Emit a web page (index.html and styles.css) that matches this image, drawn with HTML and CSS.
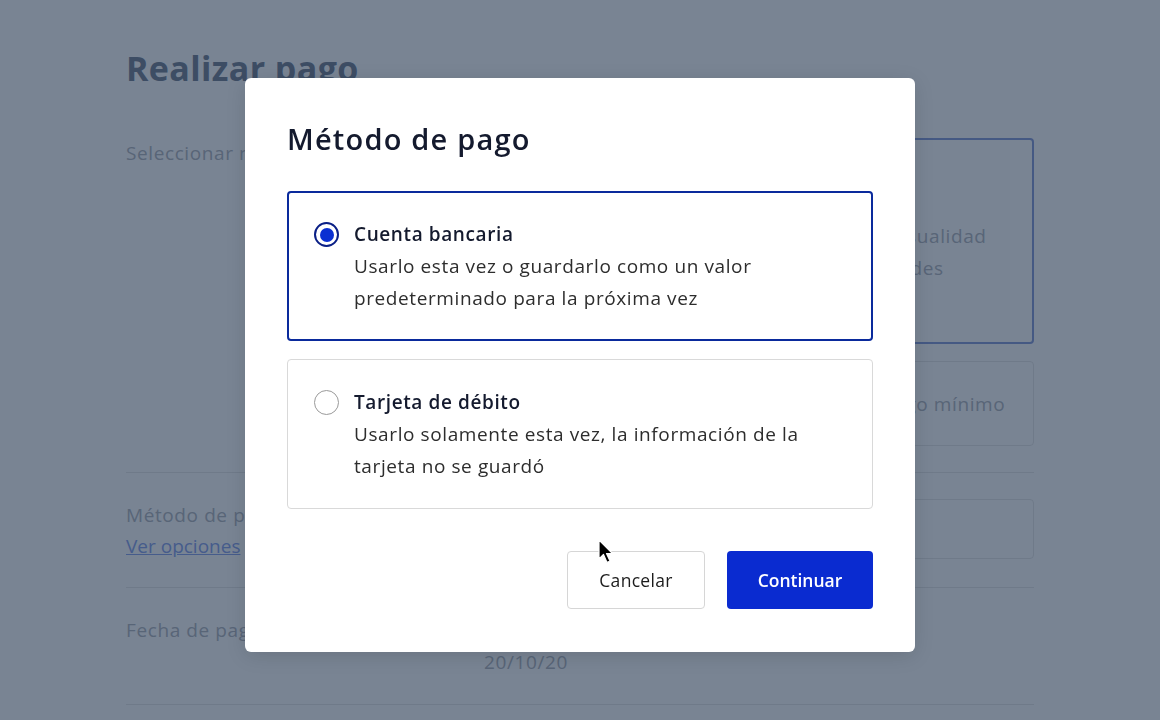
FILE: index.html
```html
<!DOCTYPE html>
<html lang="es">
<head>
    <meta charset="UTF-8">
    <meta name="viewport" content="width=device-width, initial-scale=1.0">
    <title>Realizar pago</title>
    <link rel="stylesheet" href="styles.css">
</head>
<body>
    <div class="page">
        <h1>Realizar pago</h1>

        <div class="row row-top">
            <div class="label">Seleccionar monto</div>
            <div class="choices">
                <div class="choice choice-active">
                    <div class="choice-title">Saldo total</div>
                    <div class="choice-text">Pague el saldo total de su cuenta de la mensualidad<br>y evite cargos por demora con estas facilidades</div>
                </div>
                <div class="choice choice-small">
                    <div class="choice-text">Pagar otra cantidad diferente, o hasta el pago mínimo</div>
                </div>
            </div>
        </div>

        <div class="row">
            <div class="label">
                Método de pago
                <a href="#" class="link">Ver opciones</a>
            </div>
            <div class="field"></div>
        </div>

        <div class="row">
            <div class="label">Fecha de pago</div>
            <div class="date">20/10/20</div>
        </div>
    </div>

    <div class="overlay">
        <div class="modal">
            <h2>Método de pago</h2>

            <div class="option option-selected">
                <span class="radio"></span>
                <div class="option-body">
                    <div class="option-title">Cuenta bancaria</div>
                    <div class="option-text">Usarlo esta vez o guardarlo como un valor<br>predeterminado para la próxima vez</div>
                </div>
            </div>

            <div class="option">
                <span class="radio"></span>
                <div class="option-body">
                    <div class="option-title">Tarjeta de débito</div>
                    <div class="option-text">Usarlo solamente esta vez, la información de la<br>tarjeta no se guardó</div>
                </div>
            </div>

            <div class="actions">
                <button type="button" class="btn btn-cancel">Cancelar</button>
                <button type="button" class="btn btn-primary">Continuar</button>
            </div>
        </div>

        <svg class="cursor" width="18" height="26" viewBox="0 0 18 26">
            <path d="M1 1 L1 20 L5.5 15.5 L9 23.5 L12 22 L8.5 14.5 L14.5 14.5 Z" fill="#000" stroke="#fff" stroke-width="1.2" stroke-linejoin="round"/>
        </svg>
    </div>
</body>
</html>
```

FILE: styles.css
```css
body {
    font-family: 'Open Sans', Lato, sans-serif;
    font-size: 19px;
    letter-spacing: 0.6px;
    margin: 0;
    padding: 0;
    background: #fff;
    color: #222;
    height: 720px;
    overflow: hidden;
}
.page {
    width: 908px;
    padding: 48px 0 0 126px;
}
h1 {
    font-size: 34px;
    font-weight: 700;
    letter-spacing: 0.4px;
    color: #7b8597;
    margin: 0 0 49px;
    line-height: 40px;
}
.row {
    display: flex;
    border-bottom: 1px solid #e8e8e8;
    padding: 26px 0;
}
.row-top {
    padding-top: 0;
}
.label {
    width: 344px;
    color: #b7bac2;
    line-height: 32px;
}
.link {
    display: block;
    color: #8ea6ee;
    text-decoration: underline;
    letter-spacing: 0;
    line-height: 30px;
}
.choices {
    flex: 1;
    display: flex;
    flex-direction: column;
    gap: 17px;
    margin-top: 1px;
}
.choice {
    border: 1px solid #e8e8e8;
    border-radius: 4px;
    padding: 0 26px;
    color: #b7bac2;
    line-height: 32px;
    box-sizing: border-box;
    display: flex;
    flex-direction: column;
    justify-content: center;
    overflow: hidden;
    white-space: nowrap;
}
.choice-active {
    border: 2px solid #8ca0dc;
    height: 206px;
    padding-bottom: 10px;
}
.choice-small {
    height: 85px;
}
.choice-title {
    font-weight: 700;
}
.field {
    flex: 1;
    border: 1px solid #e8e8e8;
    border-radius: 4px;
    height: 60px;
    box-sizing: border-box;
}
.date {
    flex: 1;
    color: #b7bac2;
    line-height: 32px;
    padding: 32px 0 0 14px;
}
.overlay {
    position: fixed;
    inset: 0;
    background: rgba(11, 31, 59, 0.55);
    display: flex;
    justify-content: center;
    align-items: flex-start;
    padding-top: 78px;
}
.modal {
    width: 670px;
    box-sizing: border-box;
    background: #fff;
    border-radius: 6px;
    padding: 42px 42px 43px;
    box-shadow: 0 4px 20px rgba(0, 0, 0, 0.12);
}
h2 {
    font-size: 29px;
    font-weight: 600;
    letter-spacing: 1.2px;
    color: #141a2e;
    line-height: 38px;
    margin: 0 0 33px;
}
.option {
    display: flex;
    align-items: flex-start;
    gap: 15px;
    border: 1px solid #d9d9d9;
    border-radius: 4px;
    padding: 26px;
    margin-bottom: 18px;
    height: 150px;
    box-sizing: border-box;
}
.option-selected {
    border: 2px solid #0a2a9c;
    padding: 25px;
}
.radio {
    flex: none;
    width: 25px;
    height: 25px;
    margin-top: 4px;
    border: 1.5px solid #9a9a9a;
    border-radius: 50%;
    box-sizing: border-box;
    position: relative;
}
.option-selected .radio {
    border: 2px solid #0a1f86;
}
.option-selected .radio::after {
    content: "";
    position: absolute;
    inset: 3.5px;
    border-radius: 50%;
    background: #0a2fd2;
}
.option-title {
    font-weight: 600;
    color: #141a2e;
    line-height: 32px;
}
.option-text {
    color: #2d2d2d;
    line-height: 32px;
}
.actions {
    display: flex;
    justify-content: flex-end;
    gap: 22px;
    margin-top: 42px;
}
.btn {
    height: 58px;
    border-radius: 4px;
    font-family: inherit;
    font-size: 17.5px;
    letter-spacing: 0.3px;
    cursor: pointer;
}
.btn-cancel {
    width: 138px;
    background: #fff;
    border: 1px solid #d6d6d6;
    color: #1c1c1c;
}
.btn-primary {
    width: 146px;
    background: #0a2bd0;
    border: none;
    color: #fff;
    font-weight: 600;
    letter-spacing: 0;
}
.cursor {
    position: absolute;
    left: 598px;
    top: 539px;
}
```
